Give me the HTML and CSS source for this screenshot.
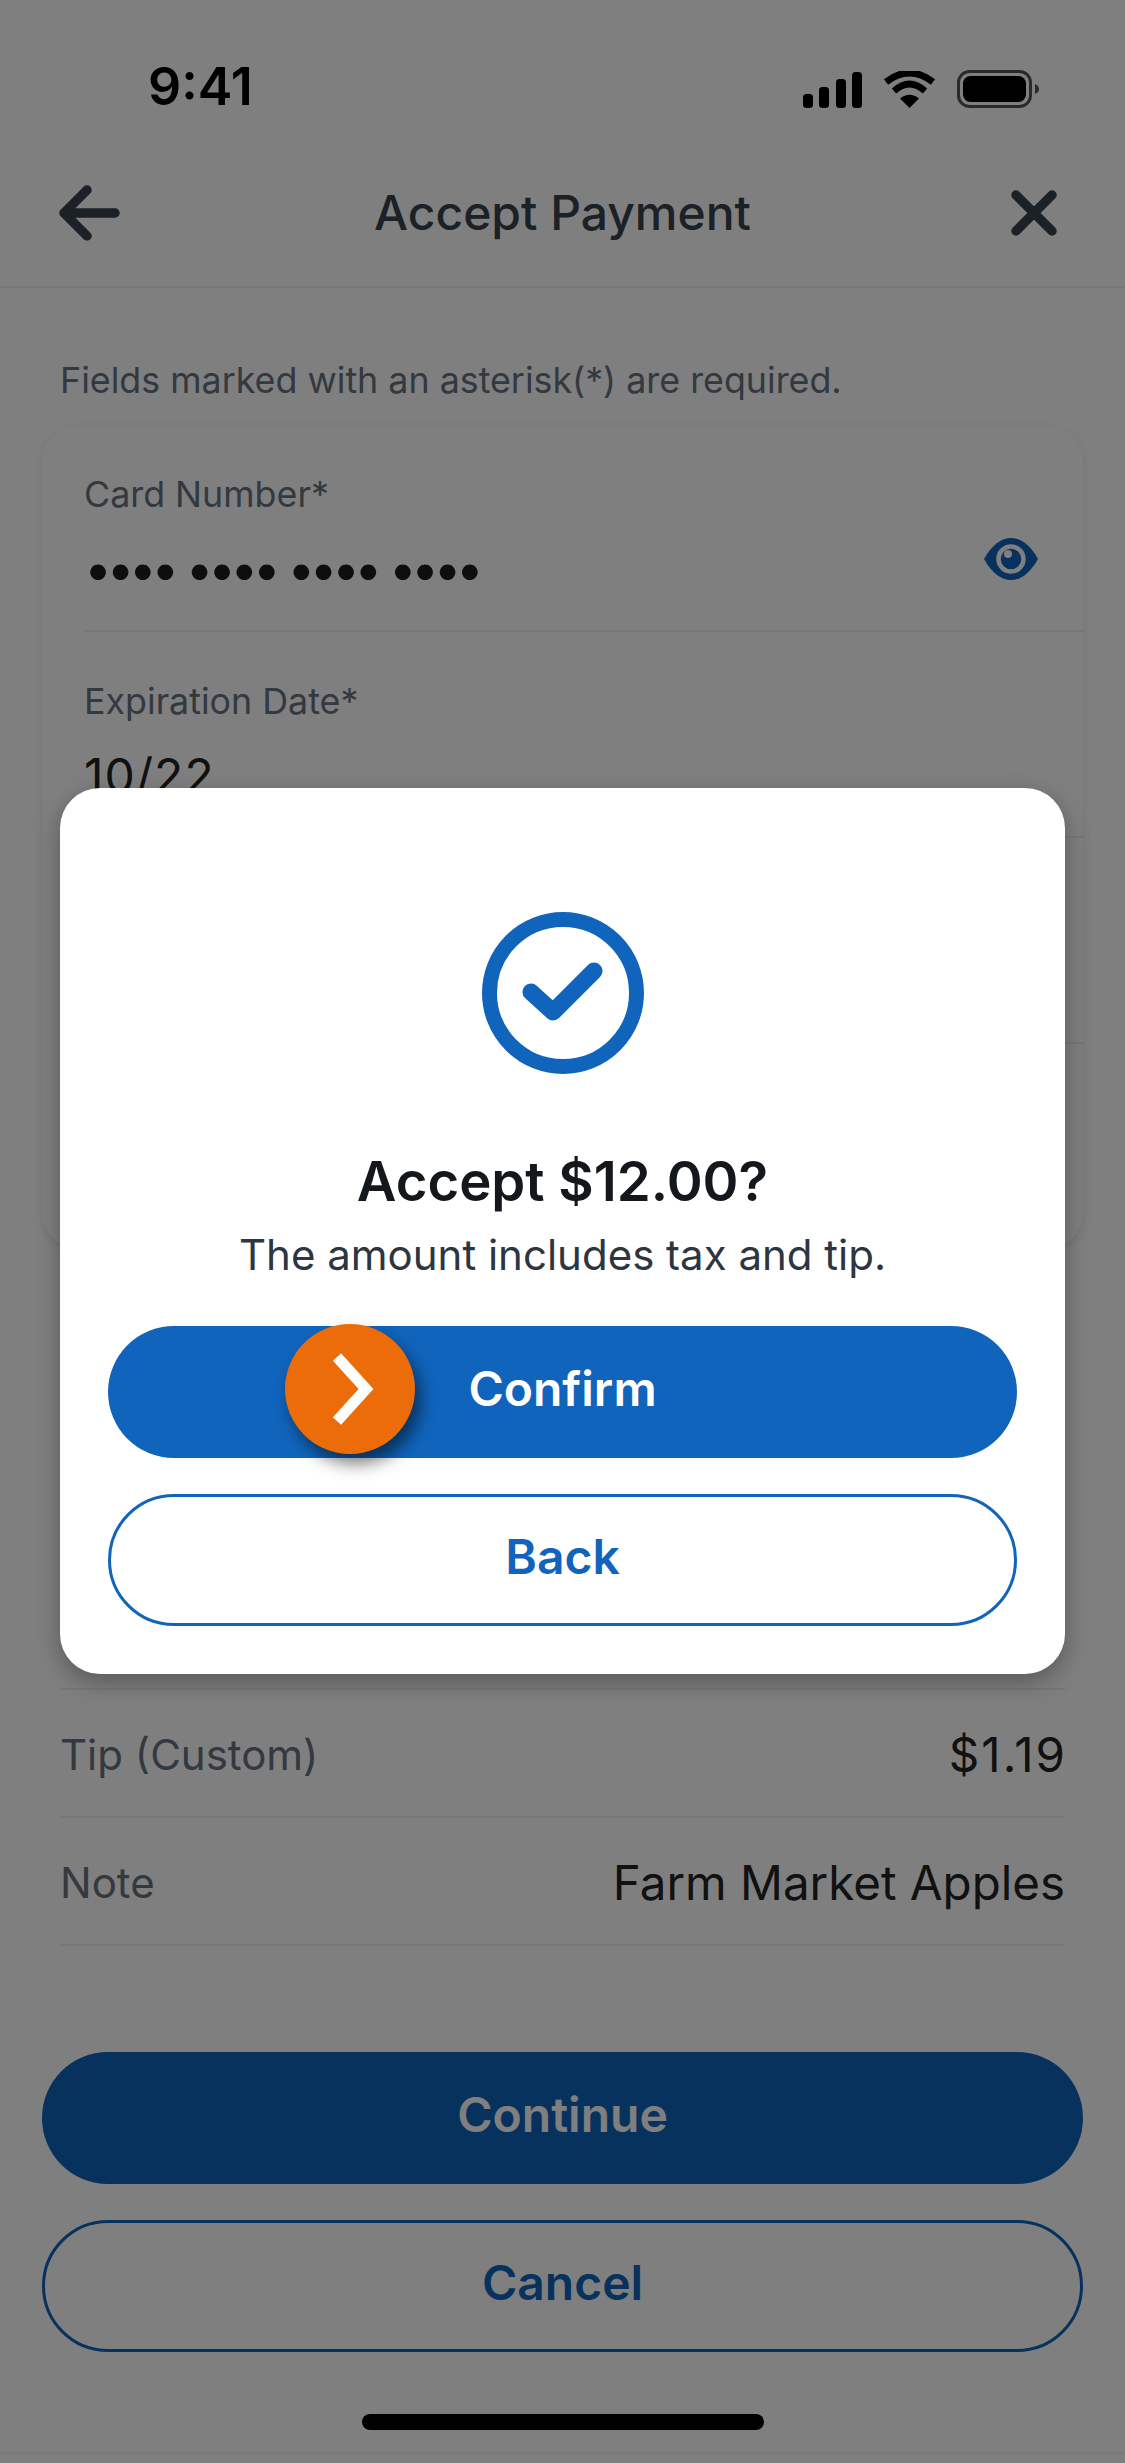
FILE: index.html
```html
<!DOCTYPE html>
<html lang="en">

<head>
  <meta charset="UTF-8">
  <meta name="viewport" content="width=device-width, initial-scale=1.0">
  <title>Accept Payment</title>
  <link rel="stylesheet" href="styles.css">
</head>

<body>
  <div class="screen">
    <div class="status-bar">
      <span class="time">9:41</span>
      <div class="status-icons">
        <svg width="59" height="36" viewBox="0 0 59 36">
          <rect x="0" y="22" width="10" height="14" rx="3.5" />
          <rect x="16" y="15" width="10" height="21" rx="3.5" />
          <rect x="33" y="7" width="10" height="29" rx="3.5" />
          <rect x="49" y="0" width="10" height="36" rx="3.5" />
        </svg>
        <svg width="53" height="37" viewBox="0 0 53 37">
          <path d="M3 11 Q26.5 -7 50 11" fill="none" stroke="#000" stroke-width="7" />
          <path d="M11 20 Q26.5 6 42 20" fill="none" stroke="#000" stroke-width="6.5" />
          <path d="M26.5 37 L17 27.5 Q26.5 20 36 27.5 Z" />
        </svg>
        <svg width="82" height="38" viewBox="0 0 82 38">
          <rect x="1.5" y="1.5" width="72" height="35" rx="11" fill="none" stroke="#555" stroke-width="3" />
          <rect x="6" y="6" width="63" height="26" rx="7.5" />
          <path d="M78 14 C81 15 82 17 82 19 C82 21 81 23 78 24 Z" fill="#555" />
        </svg>
      </div>
    </div>

    <header class="nav">
      <svg class="nav-back" width="62" height="56" viewBox="0 0 62 56">
        <path d="M57 28 H8 M29 5 L6 28 L29 51" />
      </svg>
      <h1>Accept Payment</h1>
      <svg class="nav-close" width="46" height="46" viewBox="0 0 46 46">
        <path d="M5 5 L41 41 M41 5 L5 41" />
      </svg>
    </header>

    <p class="required-note">Fields marked with an asterisk(*) are required.</p>

    <div class="card">
      <div class="field">
        <div class="field-label">Card Number*</div>
        <div class="field-row">
          <span class="field-dots">•••• •••• •••• ••••</span>
          <svg class="eye" width="54" height="42" viewBox="0 0 54 42">
            <path d="M0 21 C8 7 17 0 27 0 C37 0 46 7 54 21 C46 35 37 42 27 42 C17 42 8 35 0 21Z" fill="#1064bc" />
            <circle cx="27" cy="21" r="12.5" fill="none" stroke="#fff" stroke-width="4.5" />
            <circle cx="24" cy="16" r="4" fill="#fff" />
          </svg>
        </div>
      </div>
      <div class="field">
        <div class="field-label">Expiration Date*</div>
        <div class="field-value">10/22</div>
      </div>
      <div class="field"></div>
      <div class="field field-last"></div>
    </div>

    <div class="details">
      <div class="detail-row">
        <span class="detail-label">Tip (Custom)</span>
        <span class="detail-value detail-amount">$1.19</span>
      </div>
      <div class="detail-row">
        <span class="detail-label">Note</span>
        <span class="detail-value">Farm Market Apples</span>
      </div>
    </div>

    <div class="actions">
      <button class="btn btn-primary" type="button">Continue</button>
      <button class="btn btn-outline" type="button">Cancel</button>
    </div>

    <div class="home-bar"></div>
    <div class="end-line"></div>

    <div class="overlay"></div>

    <div class="modal">
      <svg class="modal-icon" width="162" height="162" viewBox="0 0 162 162">
        <circle cx="81" cy="81" r="73.5" />
        <path d="M49 80 L71 100 L112 59" />
      </svg>
      <h2>Accept $12.00?</h2>
      <p>The amount includes tax and tip.</p>
      <div class="modal-actions">
        <button class="btn btn-primary" type="button">
          Confirm
          <span class="knob">
            <svg width="44" height="72" viewBox="0 0 44 72">
              <path d="M4 4 L33 36 L4 68" />
            </svg>
          </span>
        </button>
        <button class="btn btn-outline" type="button">Back</button>
      </div>
    </div>
  </div>
</body>

</html>
```

FILE: styles.css
```css
* {
  box-sizing: border-box;
}

body {
  margin: 0;
  font-family: Inter, "Liberation Sans", sans-serif;
  background-color: #fff;
}

.screen {
  position: relative;
  width: 1125px;
  height: 2463px;
  overflow: hidden;
  background-color: #fff;
  display: flex;
  flex-direction: column;
}

/* status bar */
.status-bar {
  height: 139px;
  padding: 65px 86px 0 148px;
  display: flex;
  justify-content: space-between;
  align-items: flex-start;
}

.time {
  font-size: 52px;
  line-height: 44px;
  font-weight: 600;
  color: #000;
}

.status-icons {
  display: flex;
  align-items: flex-end;
  gap: 21px;
  height: 43px;
}

/* nav */
.nav {
  height: 149px;
  padding: 0 58px;
  display: grid;
  grid-template-columns: 1fr auto 1fr;
  align-items: center;
  border-bottom: 2px solid #f2f2f2;
}

.nav h1 {
  margin: 0;
  font-size: 48px;
  font-weight: 500;
  color: #36424c;
}

.nav svg path {
  fill: none;
  stroke: #36424c;
  stroke-width: 9.5;
  stroke-linecap: round;
  stroke-linejoin: round;
}

.nav-close {
  justify-self: end;
  margin-right: 10px;
}

.required-note {
  margin: 69px 0 0;
  padding-left: 60px;
  font-size: 35.8px;
  line-height: 46px;
  color: #66727e;
}

/* card */
.card {
  margin: 23px 42px 0;
  height: 823px;
  border-radius: 36px;
  background-color: #fff;
  box-shadow: 0 2px 10px rgba(0, 0, 0, 0.1);
  padding-left: 42px;
}

.field {
  height: 206px;
  padding-top: 46px;
  border-bottom: 2px solid #eeeeee;
}

.field + .field {
  padding-top: 47px;
}

.field-last {
  border-bottom: none;
}

.field-label {
  font-size: 35.8px;
  line-height: 44px;
  color: #66727e;
}

.field-row {
  height: 86px;
  padding-right: 45px;
  display: flex;
  justify-content: space-between;
  align-items: center;
}

.field-dots {
  padding-top: 20px;
  font-size: 50px;
  letter-spacing: -5.75px;
  word-spacing: 3.75px;
  color: #1c1c1c;
}

.field-value {
  padding-top: 23px;
  font-size: 48px;
  line-height: 60px;
  letter-spacing: 1px;
  color: #222;
}

/* summary rows */
.details {
  margin: 439px 60px 0;
  border-top: 2px solid #eeeeee;
}

.detail-row {
  height: 128px;
  padding-top: 2px;
  display: flex;
  justify-content: space-between;
  align-items: center;
  border-bottom: 2px solid #eeeeee;
}

.detail-label {
  font-size: 42px;
  color: #66727e;
}

.detail-value {
  font-size: 47.5px;
  color: #222;
}

.detail-amount {
  letter-spacing: 2px;
  margin-right: -2px;
}

/* buttons */
.actions {
  margin: 106px 42px 0;
  display: flex;
  flex-direction: column;
  gap: 36px;
}

.btn {
  position: relative;
  display: block;
  width: 100%;
  height: 132px;
  padding: 0 0 8px;
  border-radius: 66px;
  font-family: inherit;
  font-size: 48px;
  font-weight: 600;
  cursor: pointer;
}

.btn-primary {
  background-color: #1064bc;
  border: none;
  color: #fff;
}

.btn-outline {
  background-color: #fff;
  border: 3px solid #1064bc;
  color: #1064bc;
}

.home-bar {
  align-self: center;
  margin-top: 62px;
  width: 402px;
  height: 16px;
  border-radius: 8px;
  background-color: #000;
}

.end-line {
  margin-top: 22px;
  height: 3px;
  background-color: #f4f4f4;
}

/* dialog on top */
.overlay {
  position: absolute;
  top: 0;
  left: 0;
  right: 0;
  bottom: 0;
  background-color: rgba(0, 0, 0, 0.5);
}

.modal {
  position: absolute;
  top: 788px;
  left: 60px;
  width: 1005px;
  height: 886px;
  padding: 124px 48px 0;
  border-radius: 40px;
  background-color: #fff;
  box-shadow: 0 8px 24px rgba(0, 0, 0, 0.3);
  display: flex;
  flex-direction: column;
  align-items: center;
}

.modal-icon circle,
.modal-icon path {
  fill: none;
  stroke: #1064bc;
  stroke-width: 15;
}

.modal-icon path {
  stroke-width: 17;
  stroke-linecap: round;
  stroke-linejoin: round;
}

.modal h2 {
  margin: 75px 0 0;
  font-size: 54.5px;
  line-height: 64px;
  font-weight: 600;
  color: #14181c;
}

.modal p {
  margin: 17px 0 0;
  font-size: 42px;
  line-height: 50px;
  color: #2d3640;
}

.modal-actions {
  margin-top: 46px;
  width: 100%;
  display: flex;
  flex-direction: column;
  gap: 36px;
}

.knob {
  position: absolute;
  top: -2px;
  left: 177px;
  width: 130px;
  height: 130px;
  border-radius: 50%;
  background-color: #ec6c0a;
  box-shadow: 6px 10px 16px rgba(0, 0, 0, 0.5);
  display: flex;
  align-items: center;
  justify-content: center;
}

.knob svg {
  margin-left: 10px;
}

.knob path {
  fill: none;
  stroke: #fff;
  stroke-width: 11;
}
```
